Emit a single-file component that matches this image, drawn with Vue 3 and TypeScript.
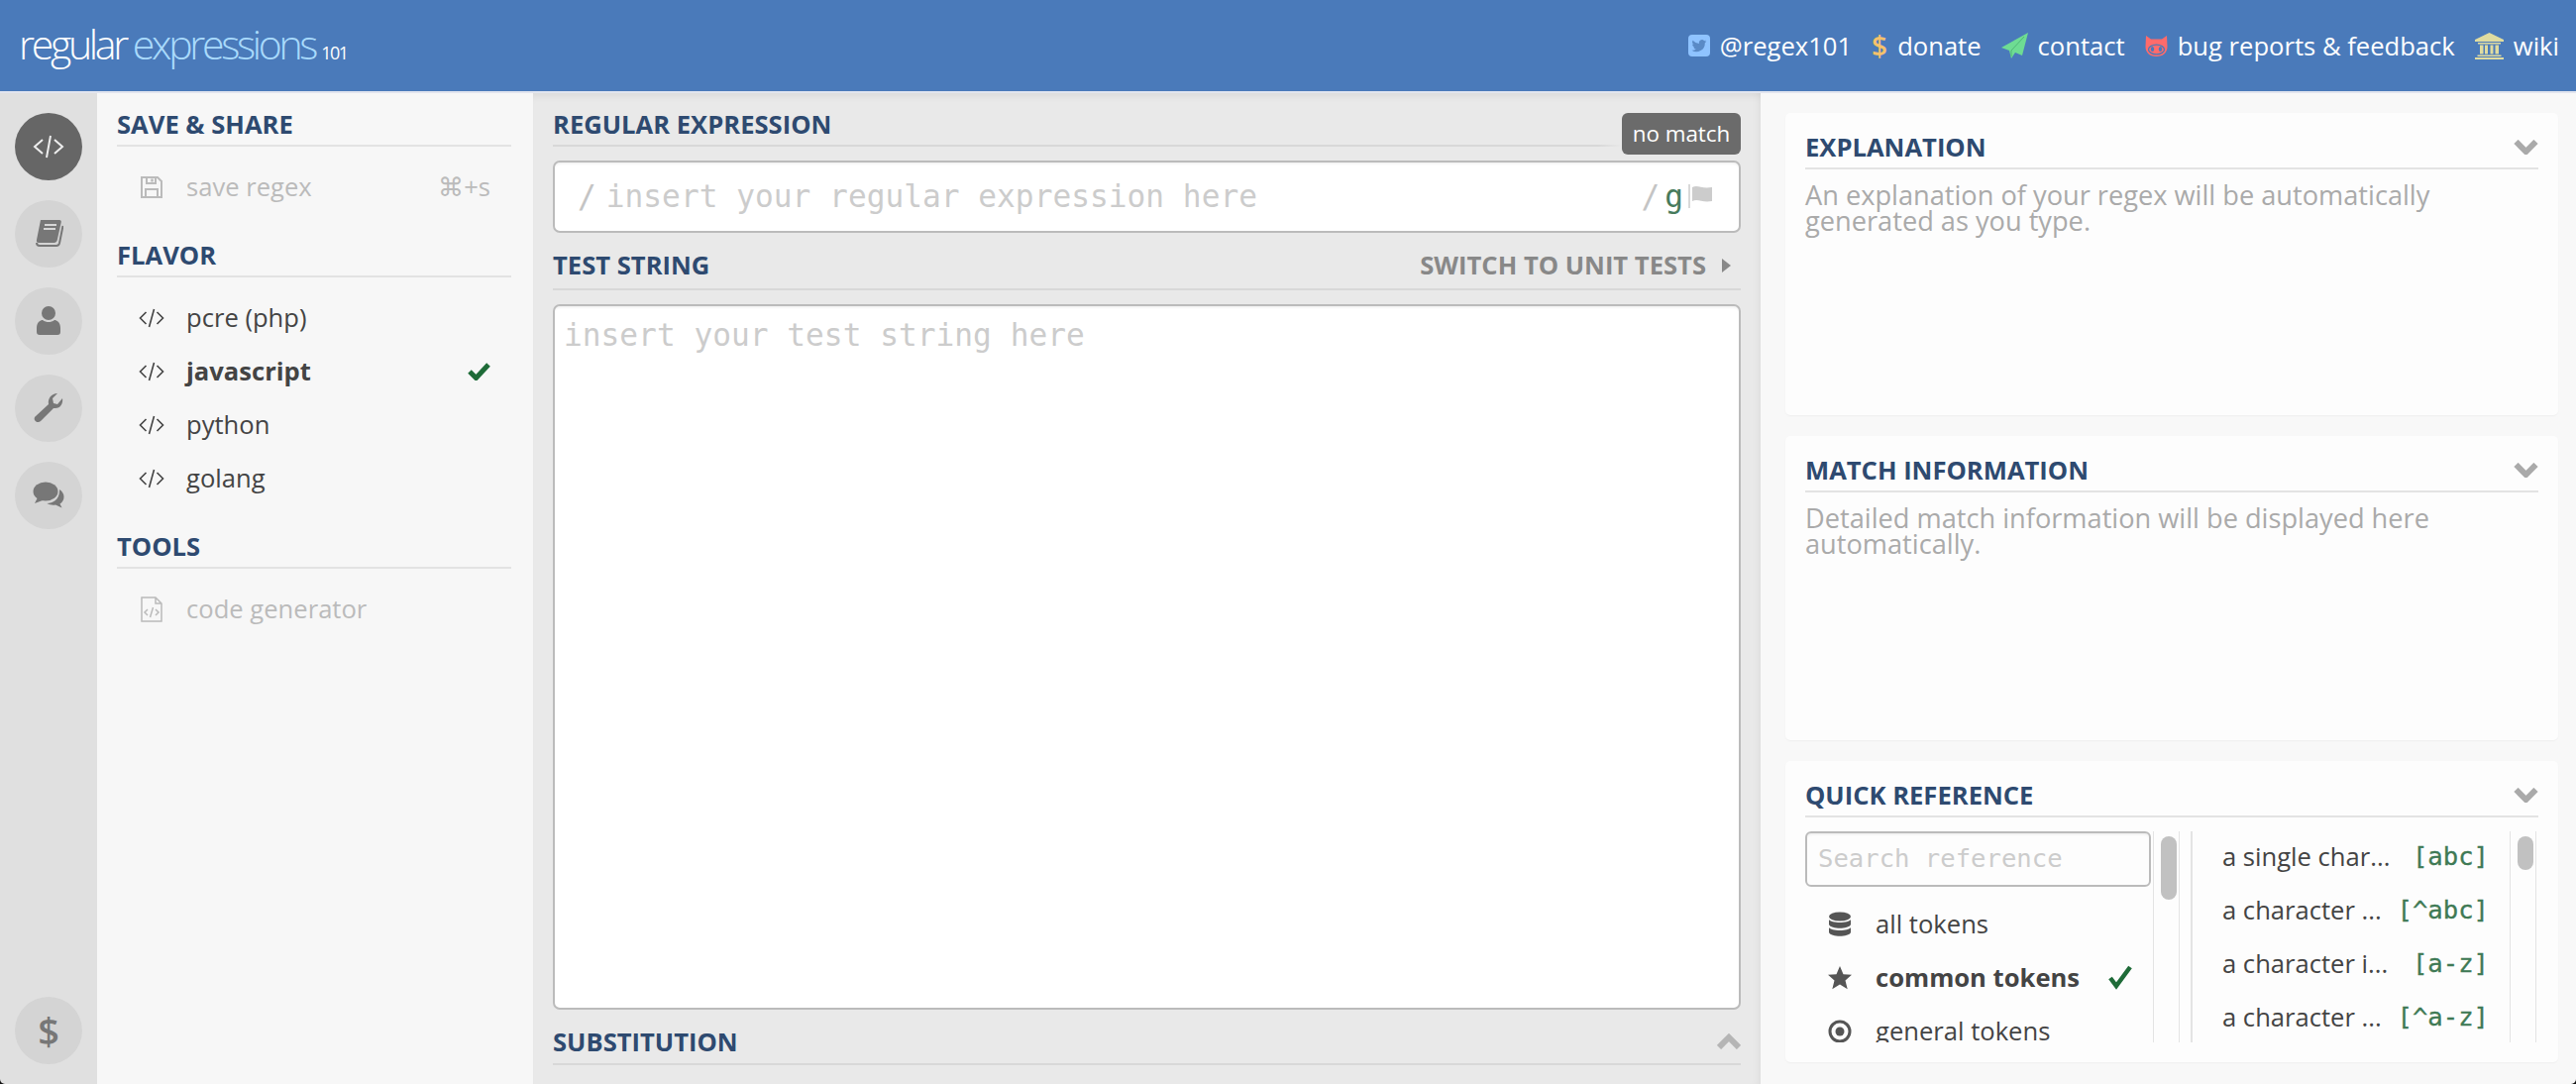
<script setup lang="ts">
const flavors = [
  { name: 'pcre (php)', active: false },
  { name: 'javascript', active: true },
  { name: 'python', active: false },
  { name: 'golang', active: false },
]
const tokens = [
  { label: 'a single char...', code: '[abc]' },
  { label: 'a character ...', code: '[^abc]' },
  { label: 'a character i...', code: '[a-z]' },
  { label: 'a character ...', code: '[^a-z]' },
]
</script>

<template>
  <div class="app">
    <header class="top">
      <div class="logo">
        <span class="l1">regular</span><span class="l2">expressions</span><span class="l3">101</span>
      </div>
      <nav class="nav">
        <span class="nav-item">
          <svg class="ni" width="22" height="24" viewBox="0 0 22 24"><rect y="1" width="22" height="22" rx="4" fill="#8fc3ff"/><path d="M18.500 7.700c-.6.300-1.200.4-1.800.5.600-.4 1.100-1 1.300-1.700-.6.400-1.200.6-1.900.7a3 3 0 0 0-5.200 2.800A8.600 8.600 0 0 1 4.600 6.800a3 3 0 0 0 .9 4c-.5 0-1-.1-1.400-.4 0 1.500 1 2.700 2.400 3-.4.100-.9.100-1.300 0 .4 1.200 1.500 2 2.800 2.100A6 6 0 0 1 3.500 16.800a8.600 8.600 0 0 0 13.300-7.600c.7-.4 1.200-.9 1.700-1.500z" fill="#5a8ac6"/></svg>
          @regex101
        </span>
        <span class="nav-item">
          <span class="ni dollar">$</span>
          donate
        </span>
        <span class="nav-item">
          <svg class="ni" width="27" height="26" viewBox="0 0 27 26"><path d="M27 0 0 15l8 3 2 8 4-6 7 3z" fill="#6edc93"/><path d="M23 4 10 18l0 6" fill="none" stroke="#4fb877" stroke-width="1"/></svg>
          contact
        </span>
        <span class="nav-item">
          <svg class="ni" width="23" height="21" viewBox="0 0 23 21"><path d="M1 0l5 3.500h11L22 0l.5 11c0 6-4 10-11 10S.5 17 .5 11z" fill="#ff6b6b"/><ellipse cx="11.500" cy="14" rx="8" ry="4.800" fill="#ff6b6b" stroke="#4a7aba" stroke-width="1.300"/><ellipse cx="7.500" cy="13.500" rx="1.700" ry="2.500" fill="#4a7aba"/><ellipse cx="15.500" cy="13.500" rx="1.700" ry="2.500" fill="#4a7aba"/></svg>
          bug reports &amp; feedback
        </span>
        <span class="nav-item">
          <svg class="ni" width="29" height="27" viewBox="0 0 29 27"><path d="M14.500 0 29 7v2H0V7zM3 10h23v1.500H3zM5 12.500h3.500v9H5zM10 12.500h3v9h-3zM15.500 12.500h3v9h-3zM20.500 12.500H24v9h-3.500zM2.500 22.500h24V24h-24zM0 25h29v2H0z" fill="#e0dca0"/></svg>
          wiki
        </span>
      </nav>
    </header>

    <div class="body">
      <aside class="rail">
        <div class="circle on">
          <svg width="32" height="24" viewBox="0 0 32 24" fill="none" stroke="#eee" stroke-width="2"><path d="M10 5 2 12l8 7M22 5l8 7-8 7M18 1l-4 22"/></svg>
        </div>
        <div class="circle">
          <svg width="30" height="30" viewBox="0 0 30 30"><path d="M7 1h19c1.500 0 2 1 1.700 2.500l-4 18c-.4 1.500-1.500 2.500-3 2.500H5c-1.700 0-2.500-1-2-3z" fill="#777"/><path d="M3 24c0 2 1 3 3 3h17c1.500 0 2.500-1 3-2.500L29.500 7" fill="none" stroke="#777" stroke-width="2"/><path d="M11 6h12M10 10h12" stroke="#d6d6d6" stroke-width="2"/></svg>
        </div>
        <div class="circle">
          <svg width="24" height="30" viewBox="0 0 24 30"><circle cx="12" cy="7" r="7" fill="#777"/><path d="M0 22c0-6 4-8 6-8 2 1.500 4 2 6 2s4-.5 6-2c2 0 6 2 6 8v4c0 2-1 3-3 3H3c-2 0-3-1-3-3z" fill="#777"/></svg>
        </div>
        <div class="circle">
          <svg width="30" height="32" viewBox="0 0 30 32"><path d="M29 6c1 5-2 11-9 10L7 29c-2 2-5 1-6-1-.7-1.500-.3-3 1-4l13-12c-1-6 3-11 9-11l-5 5 1 5 4 1z" fill="#777"/></svg>
        </div>
        <div class="circle">
          <svg width="32" height="28" viewBox="0 0 32 28"><ellipse cx="13" cy="10" rx="12.500" ry="9.500" fill="#777"/><path d="M5 16 2 22l8-3z" fill="#777"/><path d="M27 8c3 2 4.500 4.500 4.500 7.500 0 3-1.500 5.500-4 7l2 4-6.500-3c-3 .5-6 0-8.500-1.500 6 0 13-4 12.500-14z" fill="#777"/></svg>
        </div>
        <div class="circle last">
          <span class="rail-dollar">$</span>
        </div>
      </aside>

      <section class="panel">
        <h3 class="head">SAVE &amp; SHARE</h3>
        <div class="row dim">
          <svg class="ico" width="22" height="22" viewBox="0 0 22 22" fill="none" stroke="#bbb" stroke-width="2"><path d="M1 1h16l4 4v16H1zM6 1v6h9V1M5 21v-8h12v8"/><path d="M11.500 2.500v3" stroke-width="2.500"/></svg>
          <span>save regex</span>
          <span class="kbd">⌘+s</span>
        </div>
        <h3 class="head gap">FLAVOR</h3>
        <div v-for="f in flavors" :key="f.name" class="row" :class="{ act: f.active }">
          <svg class="ico" width="26" height="22" viewBox="0 0 26 22" fill="none" stroke="#444" stroke-width="1.600"><path d="M7.500 5 1.500 11l6 6M18.500 5l6 6-6 6M15.500 2l-5 18"/></svg>
          <span>{{ f.name }}</span>
          <svg v-if="f.active" class="check" width="23" height="19" viewBox="0 0 23 19"><path d="M2 10l6.500 6.500L21 3" fill="none" stroke="#1e6b38" stroke-width="5"/></svg>
        </div>
        <h3 class="head gap">TOOLS</h3>
        <div class="row dim">
          <svg class="ico" width="22" height="26" viewBox="0 0 22 26" fill="none" stroke="#bbb" stroke-width="1.500"><path d="M1 1h14l6 6v18H1zM15 1v6h6"/><path d="M7 13l-3 3 3 3M15 13l3 3-3 3M12.500 11l-3 10"/></svg>
          <span>code generator</span>
        </div>
      </section>

      <main class="main">
        <div class="regex-block">
          <h3 class="head fade">REGULAR EXPRESSION</h3>
          <span class="badge">no match</span>
        </div>
        <div class="input regex">
          <span class="slash">/</span>
          <span class="ph grow">insert your regular expression here</span>
          <span class="slash end">/</span>
          <span class="gflag">g</span>
          <svg width="26" height="24" viewBox="0 0 26 24" class="flag"><path d="M1 0v24" stroke="#ccc" stroke-width="1.500"/><path d="M4 3c6-3 9 2 20 0v14c-10 2-14-3-20 0z" fill="#ccc"/></svg>
        </div>
        <div class="head test">
          <h3 class="h">TEST STRING</h3>
          <span class="switch">SWITCH TO UNIT TESTS <i class="tri"></i></span>
        </div>
        <div class="input testbox">
          <span class="ph">insert your test string here</span>
        </div>
        <div class="head sub">
          <h3 class="h">SUBSTITUTION</h3>
          <svg class="up" width="24" height="16" viewBox="0 0 24 16"><path d="M2 14 12 4l10 10" fill="none" stroke="#b5b5b5" stroke-width="6"/></svg>
        </div>
      </main>

      <aside class="right">
        <section class="card c1">
          <div class="head chead">
            <h3 class="h">EXPLANATION</h3>
            <svg width="25" height="15" viewBox="0 0 24 15"><path d="M2 2l10 10L22 2" fill="none" stroke="#aaa" stroke-width="6"/></svg>
          </div>
          <p class="desc">An explanation of your regex will be automatically generated as you type.</p>
        </section>
        <section class="card c2">
          <div class="head chead">
            <h3 class="h">MATCH INFORMATION</h3>
            <svg width="25" height="15" viewBox="0 0 24 15"><path d="M2 2l10 10L22 2" fill="none" stroke="#aaa" stroke-width="6"/></svg>
          </div>
          <p class="desc">Detailed match information will be displayed here automatically.</p>
        </section>
        <section class="card c3">
          <div class="head chead">
            <h3 class="h">QUICK REFERENCE</h3>
            <svg width="25" height="15" viewBox="0 0 24 15"><path d="M2 2l10 10L22 2" fill="none" stroke="#aaa" stroke-width="6"/></svg>
          </div>
          <div class="qr">
            <div class="qr-left">
              <div class="search">Search reference</div>
              <div class="qrow">
                <svg class="qi" width="24" height="26" viewBox="0 0 24 26"><ellipse cx="12" cy="5" rx="11" ry="4.500" fill="#555"/><path d="M1 8c2 4 20 4 22 0v5c-2 5-20 5-22 0zM1 16c2 4 20 4 22 0v5c-2 5-20 5-22 0z" fill="#555"/></svg>
                <span>all tokens</span>
              </div>
              <div class="qrow act">
                <svg class="qi" width="24" height="24" viewBox="0 0 24 24"><path d="m12 0 3.500 8.200 8.500.6-6.500 5.600 2.200 8.800L12 18.400 4.300 23.200l2.200-8.800L0 8.800l8.500-.6z" fill="#555"/></svg>
                <span>common tokens</span>
                <svg class="qcheck" width="24" height="26" viewBox="0 0 24 26"><path d="M2 14l6 8L22 3" fill="none" stroke="#1e6b38" stroke-width="4.500"/></svg>
              </div>
              <div class="qrow">
                <svg class="qi" width="24" height="24" viewBox="0 0 24 24"><circle cx="12" cy="12" r="10" fill="none" stroke="#555" stroke-width="3"/><circle cx="12" cy="12" r="4.500" fill="#555"/></svg>
                <span>general tokens</span>
              </div>
            </div>
            <div class="track"><div class="thumb t1"></div></div>
            <div class="qr-right">
              <div v-for="(t, i) in tokens" :key="i" class="trow">
                <span>{{ t.label }}</span>
                <code>{{ t.code }}</code>
              </div>
            </div>
            <div class="track t-r"><div class="thumb t2"></div></div>
          </div>
        </section>
      </aside>
    </div>
  </div>
</template>

<style>
html, body { margin: 0; padding: 0; overflow: hidden; background: #f8f8f8; }
</style>

<style scoped>
.app { width: 2600px; height: 1094px; display: flex; flex-direction: column; font-family: "Open Sans", "Liberation Sans", sans-serif; color: #444; overflow: hidden; }
.top { height: 94px; border-bottom: 2px solid #e2e5ef; background: #4a7aba; display: flex; align-items: center; justify-content: space-between; padding: 0 17px 0 19px; flex: none; color: #fff; box-sizing: border-box; }
.logo { font-weight: 300; font-size: 41px; letter-spacing: -3.300px; line-height: 1; color: #fff; display: flex; align-items: baseline; padding-bottom: 3px; }
.l2 { color: #a9dafc; margin-left: 7px; }
.l3 { font-size: 18px; margin-left: 6px; letter-spacing: -1.500px; font-weight: 400; }
.nav { display: flex; align-items: center; font-size: 25.600px; gap: 20px; }
.nav-item { display: flex; align-items: center; gap: 10px; white-space: nowrap; }
.ni { flex: none; }
.dollar { color: #f5c26b; font-size: 28px; font-weight: 600; }

.body { flex: 1; display: flex; min-height: 0; background: #111; }
.rail { width: 98px; flex: none; background: #e0e0e0; display: flex; flex-direction: column; align-items: center; gap: 20px; padding: 20px 0; box-sizing: border-box; border-bottom-left-radius: 5px; }
.circle { width: 68px; height: 68px; border-radius: 50%; background: #d4d4d4; display: flex; align-items: center; justify-content: center; flex: none; }
.circle.on { background: #666; }
.circle.last { margin-top: auto; }
.rail-dollar { color: #777; font-size: 38px; font-weight: 600; line-height: 1; }

.panel { width: 440px; flex: none; background: #f7f7f7; padding: 20px 22px 0 20px; box-sizing: border-box; }
.head { margin: 0; height: 34px; box-sizing: border-box; border-bottom: 2px solid #e3e3e3; font-size: 25.600px; line-height: 23px; font-weight: 700; color: #2e4a70; }
.h { margin: 0; font: inherit; color: inherit; }
.head.gap { margin-top: 30px; }
.row { height: 54px; box-sizing: border-box; display: flex; align-items: center; font-size: 25.600px; color: #444; margin-top: 14px; padding: 0 21px 1px 0; }
.row + .row { margin-top: 0; }
.row .ico { width: 26px; margin-left: 22px; margin-right: 22px; flex: none; }
.row.dim { color: #bbb; }
.row.act { font-weight: 700; }
.kbd { margin-left: auto; }
.check { margin-left: auto; }

.main { width: 1239px; flex: none; background: #e9e9e9; padding: 20px 20px 0; box-sizing: border-box; box-shadow: inset 0 8px 8px -6px rgba(0,0,0,.08), inset -8px 0 8px -6px rgba(0,0,0,.05); }
.regex-block { position: relative; }
.head.fade { border-bottom: 0; padding-bottom: 2px; background: linear-gradient(to right, #d8d8d8 88%, transparent 90%) left bottom / 100% 2px no-repeat; }
.badge { position: absolute; right: 0; top: 0; width: 120px; height: 42px; border-radius: 6px; background: #6b6b6b; color: #fff; font-size: 22.400px; line-height: 1; font-weight: 400; display: flex; align-items: center; justify-content: center; }
.main .head:not(.fade) { border-color: #d8d8d8; }
.input { background: #fff; border: 2px solid #bbb; border-radius: 7px; box-sizing: border-box; font-family: "DejaVu Sans Mono", monospace; font-size: 31.200px; color: #ccc; box-shadow: inset 0 3px 3px -2px rgba(0,0,0,.08); }
.regex { height: 73px; margin-top: 14px; display: flex; align-items: center; padding: 0 25px 1px 23px; }
.slash { color: #c4c4c4; margin-right: 10px; }
.grow { flex: 1; }
.ph { color: #ccc; }
.slash.end { margin-right: 5px; }
.gflag { color: #477b5c; margin-right: 5px; }
.flag { flex: none; }
.head.test { height: 37px; margin-top: 21px; display: flex; justify-content: space-between; align-items: flex-start; }
.switch { color: #888; display: flex; align-items: center; gap: 16px; }
.tri { width: 0; height: 0; border-left: 9px solid #888; border-top: 7px solid transparent; border-bottom: 7px solid transparent; margin-right: 10px; }
.testbox { height: 712px; margin-top: 14px; padding: 11px 9px; line-height: 36px; }
.head.sub { margin-top: 21px; display: flex; justify-content: space-between; align-items: flex-start; height: 35px; }
.up { margin-top: 3px; }

.right { width: 823px; flex: none; background: #f8f8f8; padding: 20px 18px 0 25px; box-sizing: border-box; display: flex; flex-direction: column; gap: 21px; border-bottom-right-radius: 5px; }
.card { background: #fdfdfd; border-radius: 5px; padding: 22px 20px 0; box-sizing: border-box; overflow: hidden; box-shadow: 0 1px 2px rgba(0,0,0,.04); flex: none; }
.c1 { height: 305px; }
.c2 { height: 307px; }
.c3 { height: 304px; }
.chead { display: flex; justify-content: space-between; align-items: center; height: 35px; padding-bottom: 8px; }
.desc { margin: 13px 0 0; font-size: 27.200px; line-height: 26px; color: #aaa; }

.qr { display: flex; height: 213px; margin-top: 14px; overflow: hidden; }
.qr-left { width: 349px; flex: none; }
.search { height: 56px; border: 2px solid #bbb; border-radius: 6px; box-sizing: border-box; font-family: "DejaVu Sans Mono", monospace; font-size: 25.600px; color: #ccc; display: flex; align-items: center; padding: 0 0 3px 11px; box-shadow: inset 0 3px 3px -2px rgba(0,0,0,.08); }
.qrow { height: 54px; box-sizing: border-box; display: flex; align-items: center; font-size: 25.600px; color: #444; position: relative; padding-bottom: 3px; }
.search + .qrow { margin-top: 12px; }
.qi { width: 24px; margin-left: 23px; margin-right: 24px; flex: none; }
.qrow.act { font-weight: 700; }
.qcheck { position: absolute; left: 306px; top: 12px; }
.track { width: 27px; flex: none; margin-left: 2px; border-left: 1px solid #e4e4e4; border-right: 1px solid #e4e4e4; padding: 5px 0 0 7px; box-sizing: border-box; }
.thumb { width: 16px; background: #c1c1c1; border-radius: 8px; }
.t1 { height: 64px; }
.t2 { height: 34px; }
.qr-right { margin-left: 11px; width: 320px; padding: 0 19px 0 30px; box-sizing: border-box; border-left: 2px solid #e4e4e4; flex: none; }
.trow { height: 54px; box-sizing: border-box; padding-bottom: 4px; display: flex; align-items: center; justify-content: space-between; font-size: 25.600px; color: #444; }
.trow code { font-family: "DejaVu Sans Mono", monospace; font-size: 25.600px; color: #3f7a55; -webkit-text-stroke: .3px #3f7a55; }
</style>
